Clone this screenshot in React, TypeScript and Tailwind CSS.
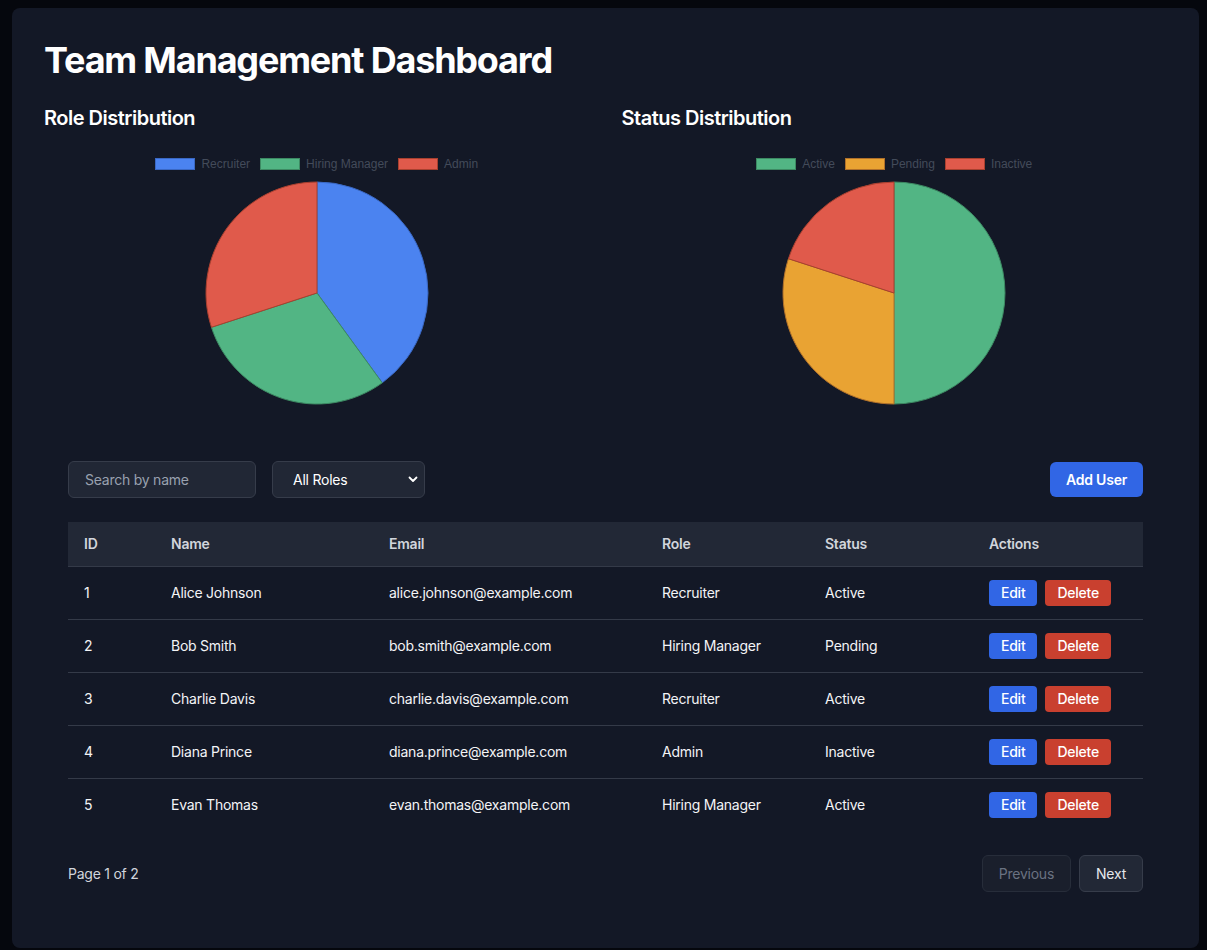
import { useState } from "react";

type Slice = { label: string; value: number; fill: string; stroke: string };

const ROLE_DATA: Slice[] = [
  { label: "Recruiter", value: 4, fill: "#4b83f0", stroke: "#3a68c4" },
  { label: "Hiring Manager", value: 3, fill: "#52b584", stroke: "#3d8a63" },
  { label: "Admin", value: 3, fill: "#e05a4b", stroke: "#a8402f" },
];

const STATUS_DATA: Slice[] = [
  { label: "Active", value: 5, fill: "#52b584", stroke: "#3d8a63" },
  { label: "Pending", value: 3, fill: "#e9a333", stroke: "#b0702a" },
  { label: "Inactive", value: 2, fill: "#e05a4b", stroke: "#a8402f" },
];

const USERS = [
  { id: 1, name: "Alice Johnson", email: "alice.johnson@example.com", role: "Recruiter", status: "Active" },
  { id: 2, name: "Bob Smith", email: "bob.smith@example.com", role: "Hiring Manager", status: "Pending" },
  { id: 3, name: "Charlie Davis", email: "charlie.davis@example.com", role: "Recruiter", status: "Active" },
  { id: 4, name: "Diana Prince", email: "diana.prince@example.com", role: "Admin", status: "Inactive" },
  { id: 5, name: "Evan Thomas", email: "evan.thomas@example.com", role: "Hiring Manager", status: "Active" },
];

function PieChart({ data }: { data: Slice[] }) {
  const total = data.reduce((s, d) => s + d.value, 0);
  const cx = 112;
  const cy = 112;
  const r = 111;
  const pt = (a: number) => [cx + r * Math.sin(a), cy - r * Math.cos(a)];
  let start = 0;
  const paths = data.map((d) => {
    const sweep = (d.value / total) * Math.PI * 2;
    const [x1, y1] = pt(start);
    const [x2, y2] = pt(start + sweep);
    const large = sweep > Math.PI ? 1 : 0;
    start += sweep;
    return {
      ...d,
      d: `M ${cx} ${cy} L ${x1} ${y1} A ${r} ${r} 0 ${large} 1 ${x2} ${y2} Z`,
    };
  });

  return (
    <div className="flex h-[289px] flex-col items-center">
      {/* legend */}
      <div className="mt-[10px] flex h-[12px] items-center gap-[10px] font-['Liberation_Sans',Arial,sans-serif] text-[12px] leading-none tracking-normal text-[#434b5a]">
        {data.map((d) => (
          <div key={d.label} className="flex items-center gap-[6px]">
            <span className="block h-[12px] w-[40px] border" style={{ backgroundColor: d.fill, borderColor: d.stroke }} />
            <span>{d.label}</span>
          </div>
        ))}
      </div>
      <svg width="224" height="224" viewBox="0 0 224 224" className="mt-[11px]">
        {paths.map((p) => (
          <path key={p.label} d={p.d} fill={p.fill} stroke={p.stroke} strokeWidth="1" strokeLinejoin="round" />
        ))}
      </svg>
    </div>
  );
}

function App() {
  const [search, setSearch] = useState("");
  const [role, setRole] = useState("all");

  return (
    <div className="min-h-screen bg-[#05070d] pb-[3px] pl-3 pr-2 pt-2 font-['Inter','Noto_Sans',sans-serif] tracking-[-0.015em]">
      <div className="rounded-lg bg-[#131826] p-8">
        <h1 className="mb-6 text-4xl font-bold tracking-[-0.033em] text-white">Team Management Dashboard</h1>

        <div className="grid grid-cols-2 gap-8">
          <div>
            <h2 className="mb-4 text-xl font-semibold tracking-[-0.025em] text-white">Role Distribution</h2>
            <PieChart data={ROLE_DATA} />
          </div>
          <div>
            <h2 className="mb-4 text-xl font-semibold tracking-[-0.025em] text-white">Status Distribution</h2>
            <PieChart data={STATUS_DATA} />
          </div>
        </div>

        <div className="p-6">
          {/* controls */}
          <div className="mb-6 flex items-center justify-between">
            <div className="flex items-center gap-4">
              <input
                value={search}
                onChange={(e) => setSearch(e.target.value)}
                placeholder="Search by name"
                className="h-[37px] w-[188px] rounded-md border border-[#363c4a] bg-[#212735] px-4 text-sm text-white placeholder:text-gray-400 outline-none"
              />
              <div className="relative">
                <select
                  value={role}
                  onChange={(e) => setRole(e.target.value)}
                  className="h-[37px] w-[153px] appearance-none rounded-md border border-[#363c4a] bg-[#212735] pl-5 text-sm text-white outline-none"
                >
                  <option value="all">All Roles</option>
                  <option value="recruiter">Recruiter</option>
                  <option value="hiring">Hiring Manager</option>
                  <option value="admin">Admin</option>
                </select>
                <svg
                  className="pointer-events-none absolute right-[7px] top-[15px]"
                  width="10"
                  height="7"
                  viewBox="0 0 10 7"
                  fill="none"
                >
                  <path d="M1.5 1.5 L5 5 L8.5 1.5" stroke="white" strokeWidth="1.8" strokeLinecap="round" strokeLinejoin="round" />
                </svg>
              </div>
            </div>
            <button className="h-[35px] rounded-md bg-[#3166e5] px-4 text-sm font-semibold text-white">Add User</button>
          </div>

          {/* table */}
          <table className="w-full text-left text-sm">
            <thead className="border-b border-[#343a48] bg-[#222836]">
              <tr>
                <th className="h-[44px] w-[87px] px-4 font-semibold text-gray-300">ID</th>
                <th className="w-[218px] px-4 font-semibold text-gray-300">Name</th>
                <th className="w-[273px] px-4 font-semibold text-gray-300">Email</th>
                <th className="w-[163px] px-4 font-semibold text-gray-300">Role</th>
                <th className="w-[164px] px-4 font-semibold text-gray-300">Status</th>
                <th className="px-4 font-semibold text-gray-300">Actions</th>
              </tr>
            </thead>
            <tbody className="divide-y divide-[#343a48]">
              {USERS.map((u) => (
                <tr key={u.id} className="text-gray-100">
                  <td className="h-[53px] px-4">{u.id}</td>
                  <td className="px-4">{u.name}</td>
                  <td className="px-4">{u.email}</td>
                  <td className="px-4">{u.role}</td>
                  <td className="px-4">{u.status}</td>
                  <td className="px-4">
                    <div className="flex items-center gap-2">
                      <button className="h-[26px] rounded bg-[#3166e5] px-3 text-sm font-medium text-white">Edit</button>
                      <button className="h-[26px] rounded bg-[#c9402f] px-3 text-sm font-medium text-white">Delete</button>
                    </div>
                  </td>
                </tr>
              ))}
            </tbody>
          </table>

          {/* pagination */}
          <div className="mt-6 flex items-center justify-between">
            <span className="text-sm text-gray-300">Page 1 of 2</span>
            <div className="flex items-center gap-2">
              <button
                disabled
                className="h-[37px] rounded-md border border-[#272d3a] bg-[#1a1f2c] px-4 text-sm text-gray-500"
              >
                Previous
              </button>
              <button className="h-[37px] rounded-md border border-[#363c4a] bg-[#222836] px-4 text-sm text-gray-200">
                Next
              </button>
            </div>
          </div>
        </div>
      </div>
    </div>
  );
}

export default App;
